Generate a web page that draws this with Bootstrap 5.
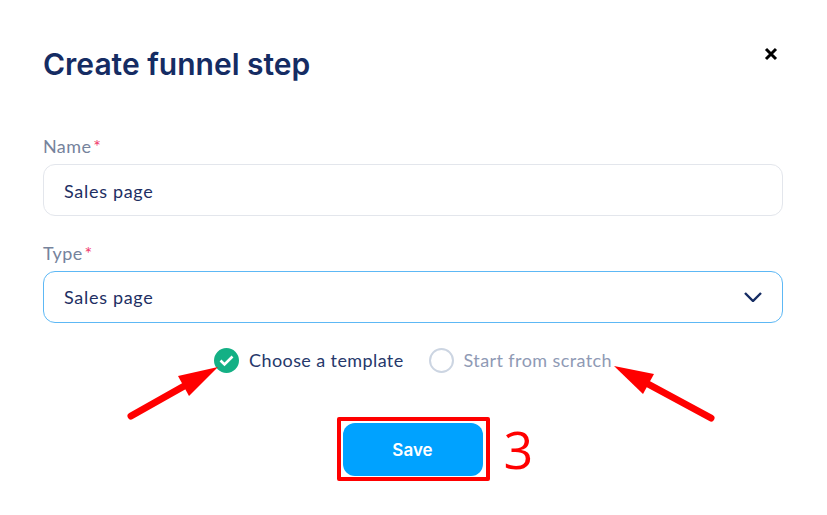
<!DOCTYPE html>
<html lang="en">
  <head>
    <meta charset="UTF-8" />
    <meta name="viewport" content="width=device-width, initial-scale=1.0" />
    <title>Create funnel step</title>
    <link
      href="https://cdn.jsdelivr.net/npm/bootstrap@5.3.0/dist/css/bootstrap.min.css"
      rel="stylesheet"
    />
    <style>
      body {
        background-color: #fff;
        font-family: "Lato", "Noto Sans", sans-serif;
        overflow: hidden;
      }
      .step-modal {
        position: relative;
        width: 827px;
        height: 515px;
        padding: 47px 44px 0 43px;
      }
      .step-title {
        font-family: "Inter", sans-serif;
        font-size: 30px;
        font-weight: 600;
        line-height: 34px;
        color: #152c63;
        margin: 0 0 56px;
      }
      .close-x {
        background: none;
        border: 0;
        padding: 0;
        line-height: 0;
        margin: 0 5px 0 0;
      }
      .field-label {
        display: block;
        font-size: 18px;
        letter-spacing: 0.4px;
        line-height: 18px;
        color: #76839c;
        margin-bottom: 9px;
      }
      .field-label span {
        color: #f0386b;
        margin-left: 2px;
      }
      .step-input.form-control,
      .step-input.form-select {
        height: 52px;
        padding: 1px 20px 0;
        font-size: 18px;
        letter-spacing: 0.7px;
        color: #1e2f63;
        border: 1px solid #e3e6ec;
        border-radius: 12px;
        box-shadow: none;
      }
      .step-input.form-select {
        border-color: #5db8f5;
        background-image: url("data:image/svg+xml,%3csvg xmlns='http://www.w3.org/2000/svg' viewBox='0 0 18 10'%3e%3cpath fill='none' stroke='%23152c63' stroke-width='2.4' d='M1 1l8 8 8-8'/%3e%3c/svg%3e");
        background-size: 18px 10px;
        background-position: right 20px center;
      }
      .name-group {
        margin-bottom: 28px;
      }
      .choice-row {
        margin-top: 25px;
        gap: 25px;
        height: 25px;
      }
      .choice-item {
        gap: 10px;
        font-size: 18px;
        letter-spacing: 0.4px;
        line-height: 25px;
        color: #26386b;
      }
      .choice-item.is-off {
        color: #8f9ab5;
      }
      .tick-radio.form-check-input {
        width: 25px;
        height: 25px;
        margin: 0;
        border: 2px solid #ccd5e2;
        box-shadow: none;
      }
      .tick-radio.form-check-input:checked[type="radio"] {
        background-color: #14b085;
        border-color: #14b085;
        background-size: 15px 15px;
        background-image: url("data:image/svg+xml,%3csvg xmlns='http://www.w3.org/2000/svg' viewBox='0 0 15 15'%3e%3cpath fill='none' stroke='%23fff' stroke-width='2.6' d='M1.5 7.5l4 4 8-8'/%3e%3c/svg%3e");
      }
      .save-area {
        margin-top: 44px;
      }
      .save-box {
        position: relative;
        border: 4px solid #f00;
        border-radius: 2px;
        padding: 2px 3px 1px 2px;
      }
      .save-btn {
        display: block;
        width: 140px;
        height: 53px;
        padding: 2px 0 0;
        font-family: "Inter", sans-serif;
        font-size: 17px;
        font-weight: 600;
        color: #fff;
        background-color: #00a2ff;
        border: 0;
        border-radius: 12px;
      }
      .step-number {
        position: absolute;
        left: 163px;
        top: -1px;
        font-family: "Open Sans", sans-serif;
        font-size: 52px;
        line-height: 58px;
        color: #f00;
      }
      .arrow-layer {
        position: absolute;
        left: 0;
        top: 0;
        pointer-events: none;
      }
    </style>
  </head>
  <body>
    <div class="step-modal">
      <div class="d-flex justify-content-between align-items-start">
        <h1 class="step-title">Create funnel step</h1>
        <button type="button" class="close-x" aria-label="Close">
          <svg width="14" height="14" viewBox="0 0 14 14">
            <path d="M2 2l10 10M12 2L2 12" stroke="#000" stroke-width="3" fill="none" />
          </svg>
        </button>
      </div>
      <form>
        <div class="name-group">
          <label class="field-label" for="stepName">Name<span>*</span></label>
          <input id="stepName" class="form-control step-input" type="text" value="Sales page" />
        </div>
        <div>
          <label class="field-label" for="stepType">Type<span>*</span></label>
          <select id="stepType" class="form-select step-input">
            <option>Sales page</option>
          </select>
        </div>
        <div class="d-flex justify-content-center choice-row">
          <label class="d-flex align-items-center choice-item">
            <input class="form-check-input tick-radio" type="radio" name="source" checked />
            Choose a template
          </label>
          <label class="d-flex align-items-center choice-item is-off">
            <input class="form-check-input tick-radio" type="radio" name="source" />
            Start from scratch
          </label>
        </div>
        <div class="d-flex justify-content-center save-area">
          <div class="save-box">
            <button type="button" class="btn save-btn">Save</button>
            <span class="step-number">3</span>
          </div>
        </div>
      </form>
      <svg class="arrow-layer" width="827" height="515" viewBox="0 0 827 515">
        <path d="M131 416L186 385" stroke="#f00" stroke-width="7" stroke-linecap="round" fill="none" />
        <path d="M218 367L178 376L189 396Z" fill="#f00" />
        <path d="M711 418L648 384" stroke="#f00" stroke-width="7" stroke-linecap="round" fill="none" />
        <path d="M614 366L654 374L643 394Z" fill="#f00" />
      </svg>
    </div>
    <script src="https://cdn.jsdelivr.net/npm/bootstrap@5.3.0/dist/js/bootstrap.bundle.min.js"></script>
  </body>
</html>
